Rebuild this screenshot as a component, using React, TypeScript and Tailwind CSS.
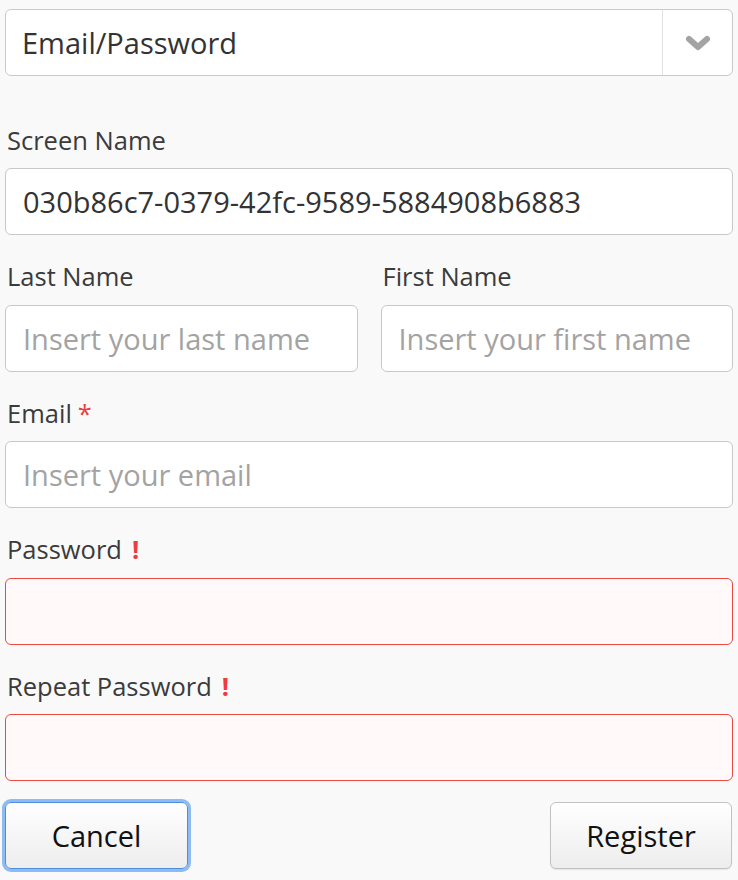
import React from 'react';

interface Field {
  label: string;
  placeholder?: string;
  value?: string;
  mark?: 'required' | 'error';
}

const Label: React.FC<{ text: string; mark?: 'required' | 'error' }> = ({ text, mark }) => (
  <div className="h-[33px] flex items-center pl-[2px] text-[25.5px] text-[#3b3b3b] leading-none">
    <span>{text}</span>
    {mark === 'required' && <span className="ml-[6px] text-[#e8403a]">*</span>}
    {mark === 'error' && <span className="ml-[10px] font-bold text-[#ee3b3b]">!</span>}
  </div>
);

const Input: React.FC<{ placeholder?: string; value?: string; error?: boolean }> = ({ placeholder, value, error }) => (
  <input
    readOnly
    type="text"
    value={value ?? ''}
    placeholder={placeholder}
    className={`block w-full h-[67px] rounded-[6px] border px-[17px] text-[29px] text-[#333] placeholder:text-[#a3a3a3] outline-none ${
      error ? 'border-[#ec4a40] bg-[#fffaf9]' : 'border-[#c8c8c8] bg-white'
    }`}
  />
);

const App: React.FC = () => {
  const fields: Field[] = [
    { label: 'Email', placeholder: 'Insert your email', mark: 'required' },
    { label: 'Password', mark: 'error' },
    { label: 'Repeat Password', mark: 'error' },
  ];

  return (
    <div className="min-h-[880px] w-[738px] bg-[#f9f9f9] px-[5px] pt-[9px]" style={{ fontFamily: '"Open Sans", sans-serif' }}>
      {/* login type select */}
      <div className="flex h-[67px] rounded-[6px] border border-[#cacaca] bg-white">
        <div className="flex-1 flex items-center pl-[16px] text-[29px] text-[#333]">Email/Password</div>
        <div className="w-[70px] border-l border-[#e2e2e2] flex items-center justify-center">
          <svg width="28" height="20" viewBox="0 0 28 20">
            <path d="M5 6 L14 14 L23 6" fill="none" stroke="#a3a3a3" strokeWidth="6" strokeLinecap="round" strokeLinejoin="round" />
          </svg>
        </div>
      </div>

      <div className="mt-[48px]">
        <Label text="Screen Name" />
        <div className="mt-[11px]">
          <Input value="030b86c7-0379-42fc-9589-5884908b6883" />
        </div>
      </div>

      <div className="mt-[25.5px] grid grid-cols-2 gap-[23px]">
        <div>
          <Label text="Last Name" />
          <div className="mt-[11px]">
            <Input placeholder="Insert your last name" />
          </div>
        </div>
        <div>
          <Label text="First Name" />
          <div className="mt-[11px]">
            <Input placeholder="Insert your first name" />
          </div>
        </div>
      </div>

      {fields.map((f, i) => (
        <div key={i} className="mt-[25.5px]">
          <Label text={f.label} mark={f.mark} />
          <div className="mt-[11px]">
            <Input placeholder={f.placeholder} error={f.mark === 'error'} />
          </div>
        </div>
      ))}

      <div className="mt-[21px] flex justify-between">
        <button className="w-[183px] h-[67px] rounded-[6px] border border-[#4a8fe0] bg-gradient-to-b from-white to-[#ededed] text-[29px] text-[#111] shadow-[0_0_0_3px_#8dbbf2]">
          Cancel
        </button>
        <button className="w-[182px] h-[67px] mr-[1px] rounded-[6px] border border-[#c2c2c2] bg-gradient-to-b from-white to-[#ededed] text-[29px] text-[#111] shadow-[0_1px_1px_rgba(0,0,0,0.08)]">
          Register
        </button>
      </div>
    </div>
  );
};

export default App;
